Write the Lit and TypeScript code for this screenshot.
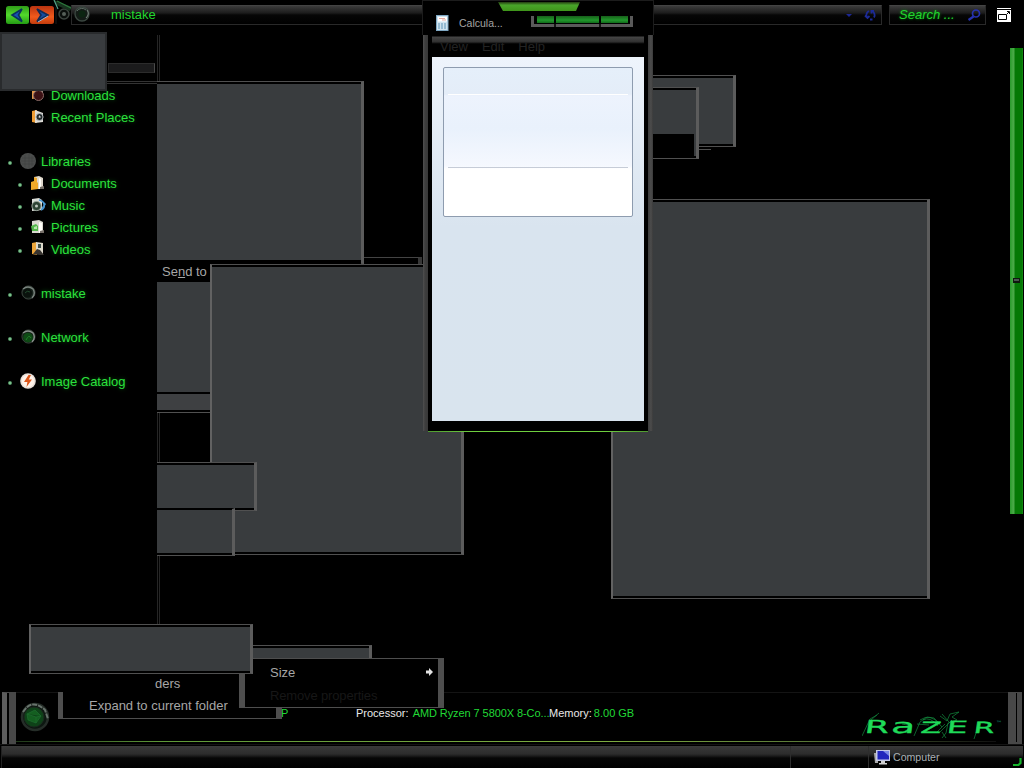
import {LitElement, html, css, svg} from 'lit';
import {customElement, property} from 'lit/decorators.js';
import {classMap} from 'lit/directives/class-map.js';
import {styleMap} from 'lit/directives/style-map.js';

type IconName =
    | 'orb' | 'libraries' | 'dark' | 'downloads' | 'recent' | 'documents'
    | 'music' | 'pictures' | 'videos' | 'network' | 'catalog';

interface NavItem {
    label: string;
    icon: IconName;
    level: 0 | 1;
    dot?: boolean;
    gap?: boolean;
}

interface Block {
    x: number;
    y: number;
    w: number;
    h: number;
    kind: string;
}

const NAV: NavItem[] = [
    {label: 'Downloads', icon: 'downloads', level: 1},
    {label: 'Recent Places', icon: 'recent', level: 1},
    {label: 'Libraries', icon: 'libraries', level: 0, dot: true, gap: true},
    {label: 'Documents', icon: 'documents', level: 1, dot: true},
    {label: 'Music', icon: 'music', level: 1, dot: true},
    {label: 'Pictures', icon: 'pictures', level: 1, dot: true},
    {label: 'Videos', icon: 'videos', level: 1, dot: true},
    {label: 'mistake', icon: 'dark', level: 0, dot: true, gap: true},
    {label: 'Network', icon: 'network', level: 0, dot: true, gap: true},
    {label: 'Image Catalog', icon: 'catalog', level: 0, dot: true, gap: true},
];

// Menu and window frames lying over the desktop, back to front.
const BLOCKS: Block[] = [
    {x: 157, y: 35, w: 3, h: 46, kind: 'rails'},
    {x: 157, y: 412, w: 3, h: 213, kind: 'rails'},
    {x: 107, y: 81, w: 50, h: 3, kind: 'lines'},
    {x: 108, y: 63, w: 47, h: 10, kind: 'chip'},
    {x: 157, y: 81, w: 207, h: 183, kind: 'panel open-left'},
    {x: 157, y: 260, w: 204, h: 4, kind: 'black'},
    {x: 364, y: 257, w: 58, h: 7, kind: 'strip'},
    {x: 157, y: 282, w: 54, h: 110, kind: 'fill'},
    {x: 157, y: 394, w: 54, h: 16, kind: 'fill light'},
    {x: 157, y: 412, w: 54, h: 1, kind: 'line'},
    {x: 210, y: 264, w: 254, h: 291, kind: 'panel'},
    {x: 157, y: 462, w: 100, h: 49, kind: 'panel open-left'},
    {x: 157, y: 508, w: 78, h: 48, kind: 'panel open-left flat-top'},
    {x: 640, y: 75, w: 96, h: 72, kind: 'panel'},
    {x: 640, y: 87, w: 59, h: 72, kind: 'panel'},
    {x: 640, y: 134, w: 54, h: 23, kind: 'black'},
    {x: 699, y: 149, w: 12, h: 1, kind: 'line'},
    {x: 611, y: 199, w: 319, h: 400, kind: 'panel'},
    {x: 240, y: 645, w: 132, h: 20, kind: 'panel'},
    {x: 0, y: 32, w: 107, h: 59, kind: 'soft'},
];

const ICONS = {
    orb: svg`
        <circle cx="8" cy="8" r="7" fill="#141c17" stroke="#3b4740" stroke-width="1.4"/>
        <path d="M3 5a6 6 0 0 1 9-1" stroke="#5e6b64" fill="none"/>
        <circle cx="8" cy="8" r="3.5" fill="#0c2512"/>
        <path d="M13 4q3 4-1 8" stroke="#7b8881" fill="none"/>`,
    dark: svg`
        <circle cx="8.5" cy="7.5" r="6.6" fill="#19251e" stroke="#39423c"/>
        <path d="M3 4q5-4 10 0q3 5-1 9" stroke="#7a837e" stroke-width="1.4" fill="none"/>
        <circle cx="7.5" cy="8" r="4.6" fill="#0a120d"/>
        <path d="M5 8q2-3 5-1" stroke="#22482d" fill="none"/>`,
    network: svg`
        <circle cx="8.5" cy="7.5" r="6.6" fill="#152218" stroke="#39423c"/>
        <path d="M3 4q5-4 10 0q3 5-1 9" stroke="#89918c" stroke-width="1.4" fill="none"/>
        <circle cx="8" cy="8.5" r="4.8" fill="#0e4a15"/>
        <path d="M6 11q3-6 5-2" stroke="#247e2c" fill="none"/>`,
    libraries: svg`
        <circle cx="8" cy="8" r="8" fill="#4b4d4c"/>
        <path d="M2 5h12M1 8h14M2 11h12M5 2v12M9 1v14M12 3v10" stroke="#404241" stroke-width=".6"/>`,
    downloads: svg`
        <path d="M1 3l6-1v9l-6 1z" fill="#e0964c"/>
        <path d="M6 2l6 1v5H6z" fill="#9a8a80"/>
        <circle cx="7.5" cy="8.5" r="5" fill="#3b1114" stroke="#8a6a66"/>`,
    recent: svg`
        <path d="M1 2l5-1v13l-5-1z" fill="#ef9d35"/>
        <path d="M4 1l8 3v9l-8 1z" fill="#dedcd6"/>
        <circle cx="8.5" cy="8" r="3.6" fill="#222a2c" stroke="#b7bdc0"/>
        <path d="M7.5 8h2.5M8.5 6.5v2" stroke="#eee" stroke-width=".8"/>`,
    documents: svg`
        <path d="M3 2l5-1 4 2v11H3z" fill="#ded8cb"/>
        <path d="M0 7l3-1V2l3 1v4l1 1v6l-7 1z" fill="#f0a929"/>
        <path d="M8 3l2 1v9l-2 1z" fill="#fffdf6"/>
        <path d="M9 12l4-1v3h-4z" fill="#726c64"/>`,
    music: svg`
        <path d="M1 2l7-1 3 2v10l-10 1z" fill="#d9dcd5"/>
        <circle cx="5.5" cy="9" r="4.6" fill="#2d4434" stroke="#98a49b"/>
        <circle cx="5.5" cy="9" r="1.5" fill="#bfc9c1"/>
        <path d="M8 3c6 1 7 8 2 10M11 4l3 3-3 5" stroke="#4796d1" stroke-width="1.6" fill="none"/>`,
    pictures: svg`
        <path d="M1 2l7-1 4 2v11H1z" fill="#d9d8cf"/>
        <path d="M8 3l3 1v9l-3 1z" fill="#fffef8"/>
        <path d="M0 7l5-2 2 2v5H1z" fill="#53b64a"/>
        <path d="M3 8l3-1v3H3z" fill="#b4e5a8"/>
        <path d="M9 12l4-1v3h-4z" fill="#77706a"/>`,
    videos: svg`
        <path d="M1 2l5-1v13l-5-1z" fill="#eda63a"/>
        <path d="M5 1l7 1v11H5z" fill="#ddd9cb"/>
        <path d="M7 3h3v4H7z" fill="#3c4c4a"/>
        <path d="M2 13l4-5 3 1 4 5H9z" fill="#383430"/>`,
    catalog: svg`
        <circle cx="8" cy="8" r="7.8" fill="#e8dfd8"/>
        <circle cx="8" cy="8" r="6.2" fill="#fff3ea"/>
        <path d="M8.5 2L4 9h3.4L6.5 14 12 6.6H8.8L11 2z" fill="#dc571b"/>`,
};

@customElement('skin-icon')
export class SkinIcon extends LitElement {
    static override styles = css`
        :host, svg {
            display: block;
            width: 16px;
            height: 16px;
        }
    `;

    @property()
    name: IconName = 'orb';

    override render() {
        return html`<svg viewBox="0 0 16 16">${ICONS[this.name]}</svg>`;
    }
}

@customElement('nav-tree')
export class NavTree extends LitElement {
    static override styles = css`
        :host {
            display: block;
            width: 157px;
            padding-top: 52px;
            color: #2ce23d;
            font-size: 13px;
        }

        .row {
            display: flex;
            align-items: center;
            height: 22px;
            padding-left: 8px;
            text-shadow: 0 0 4px #0a5c12;
        }

        .row.child {
            padding-left: 18px;
        }

        .row.gap {
            margin-top: 22px;
        }

        .dot {
            width: 4px;
            height: 4px;
            margin-top: 4px;
            border-radius: 50%;
            background: radial-gradient(#7cbf8d 25%, #205c30);
        }

        .dot.off {
            visibility: hidden;
        }

        skin-icon {
            margin: 0 5px 0 8px;
        }

        .child skin-icon {
            margin: 0 4px 0 9px;
        }
    `;

    override render() {
        return NAV.map((item) => html`
            <div class=${classMap({row: true, child: item.level === 1, gap: !!item.gap})}>
                <span class=${classMap({dot: true, off: !item.dot})}></span>
                <skin-icon name=${item.icon}></skin-icon>
                <span>${item.label}</span>
            </div>
        `);
    }
}

@customElement('calculator-window')
export class CalculatorWindow extends LitElement {
    static override styles = css`
        :host {
            display: flex;
            flex-direction: column;
            position: absolute;
            left: 422px;
            top: 0;
            width: 232px;
            height: 432px;
        }

        .title {
            display: flex;
            box-sizing: border-box;
            height: 35px;
            flex: none;
            padding: 14px 0 0 13px;
            background: #000;
            border: solid #1c1c1c;
            border-width: 1px 1px 0;
            color: #a4a4a4;
            font-size: 10.5px;
            line-height: 16px;
        }

        .title span {
            width: 72px;
            margin-left: 10px;
        }

        .calc {
            width: 13px;
            height: 16px;
        }

        .tab {
            position: absolute;
            left: 76px;
            top: 1px;
        }

        .frame {
            flex: 1;
            display: flex;
            flex-direction: column;
            margin: 0 1px;
            padding: 0 4px;
            background:
                linear-gradient(90deg, #505050, #3e3e3e 2px, #383838) 0 0 / 5px 100% no-repeat,
                linear-gradient(90deg, #3c3c3c, #4c4c4c 3px, #3a3a3a) 100% 0 / 5px 100% no-repeat,
                #000;
            border: solid transparent;
            border-width: 0 5px;
            background-origin: border-box;
        }

        .bottom {
            height: 1px;
            margin: 0 6px;
            background: linear-gradient(90deg, #4f9a2f, #6fcf3f 20%, #6fcf3f 80%, #4f9a2f);
        }

        .menu {
            box-sizing: border-box;
            height: 22px;
            padding: 3px 0 0 8px;
            display: flex;
            gap: 14px;
            color: #232323;
            font-size: 13px;
            line-height: 17px;
            background: linear-gradient(#000, #000 1px, #454545 2px, #303030 7px, #111 8px, #000 9px);
        }

        .client {
            flex: 1;
            margin-bottom: 10px;
            padding: 10px 11px;
            background: linear-gradient(#eef4fc, #d9e4ef 170px, #d9e4ee);
        }

        .display {
            box-sizing: border-box;
            height: 150px;
            padding: 0 4px;
            border: 1px solid #8e9caf;
            border-radius: 2px;
            background: linear-gradient(#e5effa, #e4edf8 26px, #edf3fd 28px, #e9f1fc 60px, #f5f8fe 98px, #fff 101px);
        }

        .history {
            height: 26px;
            border-bottom: 1px solid #fff;
        }

        .entry {
            height: 72px;
            border-bottom: 1px solid #c6ccd7;
        }
    `;

    override render() {
        return html`
            <div class="title">
                <svg class="calc" viewBox="0 0 13 16">
                    <rect x=".5" y=".5" width="11.5" height="15" fill="#cfe2ee" stroke="#7fa8c4"/>
                    <rect x="2" y="2" width="9" height="4.5" fill="#fff"/>
                    <path d="M3 3.5h6M6 5h4" stroke="#de9488" stroke-width=".8"/>
                    <path d="M2 9h2m1 0h2m1 0h2M2 11h2m1 0h2m1 0h2M2 13h2m1 0h2m1 0h2" stroke="#5d91b4" stroke-width="1.2"/>
                </svg>
                <span>Calcula...</span>
            </div>
            <svg class="tab" width="136" height="28">
                <defs>
                    <linearGradient id="g" x2="0" y2="1">
                        <stop stop-color="#243b12"/><stop offset=".35" stop-color="#49a52a"/>
                        <stop offset="1" stop-color="#3f951a"/>
                    </linearGradient>
                    <linearGradient id="b" x2="0" y2="1">
                        <stop stop-color="#17601a"/><stop offset=".6" stop-color="#21972c"/>
                        <stop offset="1" stop-color="#116c1b"/>
                    </linearGradient>
                </defs>
                <path d="M0 1h82l-4 9H5z" fill="url(#g)"/>
                <path d="M34.5 15v9.5h99V15" fill="none" stroke="#5a5a5a" stroke-width="3"/>
                <path d="M39 15h17v7H39zM58 15h43v7H58zM103 15h27v7h-27z" fill="url(#b)"/>
                <path d="M57 15v12M102 15v12" stroke="#000" stroke-width="1.5"/>
            </svg>
            <div class="frame">
                <div class="menu"><span>View</span><span>Edit</span><span>Help</span></div>
                <div class="client">
                    <div class="display">
                        <div class="history"></div>
                        <div class="entry"></div>
                    </div>
                </div>
            </div>
            <div class="bottom"></div>
        `;
    }
}

@customElement('app-root')
export class AppRoot extends LitElement {
    static override styles = css`
        :host {
            display: flex;
            flex-direction: column;
            position: relative;
            width: 1024px;
            height: 768px;
            overflow: hidden;
            background: #000;
            font-family: 'Liberation Sans', Arial, sans-serif;
            color: #a6a6a6;
        }

        .toolbar {
            display: flex;
            box-sizing: border-box;
            height: 32px;
            padding: 5px 0 0 5px;
        }

        .nav {
            width: 70px;
            height: 26px;
            margin-top: -5px;
            flex: none;
        }

        .field {
            display: flex;
            box-sizing: border-box;
            height: 20px;
            border: 1px solid #292929;
            border-top-color: #444;
            background: linear-gradient(#3c3c3c, #1c1c1c 7px, #060606 9px, #000);
            font-size: 13px;
            line-height: 18px;
            color: #22d62e;
        }

        .address {
            width: 811px;
            margin-left: -4px;
            padding-left: 2px;
        }

        .address span {
            flex: 1;
            margin-left: 21px;
        }

        .search {
            width: 97px;
            margin-left: 7px;
            padding-left: 9px;
            justify-content: space-between;
            font-style: italic;
            text-shadow: 0 0 3px #0a8a14;
        }

        .tools {
            flex: none;
            height: 18px;
        }

        .restore {
            margin: 3px 0 0 11px;
        }

        .body {
            display: flex;
            justify-content: space-between;
            height: 659px;
        }

        .scroll {
            box-sizing: border-box;
            width: 13px;
            height: 466px;
            margin: 16px 1px 0 0;
            padding: 230px 0 0 3px;
            background: linear-gradient(90deg, #2a9a2c, #46a944 3px, #4ca84a 4px, #057805 5px, #057805 12px, #1a951a);
        }

        .grip {
            width: 5px;
            height: 2px;
            border: 1px solid #10180f;
            border-bottom-width: 2px;
            background: #4b554f;
        }

        .details {
            display: flex;
            box-sizing: border-box;
            height: 54px;
            border-bottom: 1px solid #141414;
            font-size: 11px;
            line-height: 13px;
            background:
                linear-gradient(90deg, #20381a, #5f9a38 15%, #7ead40 60%, #5b7a37 80%, #111) 16px 50px / 980px 1px no-repeat,
                linear-gradient(#141414, #141414) 16px 1px / 992px 1px no-repeat;
        }

        .edge {
            width: 14px;
            height: 52px;
            margin: 1px 3px 0 2px;
            box-sizing: border-box;
            border: solid #484848;
            border-width: 1px 7px 0 5px;
            border-left-color: #5d5d5d;
            background: #000;
        }

        .edge.right {
            margin: 1px 2px 0 4px;
            border-width: 1px 5px 2px 8px;
            border-color: #484848;
        }

        .start {
            margin-top: 8px;
        }

        .facts {
            display: flex;
            flex: 1;
            padding: 16px 0 0 229px;
            white-space: nowrap;
            color: #e9e9e9;
        }

        .facts b {
            font-weight: 400;
            color: #21d936;
        }

        .tail {
            width: 75px;
        }

        .cpu {
            width: 193px;
        }

        .cpu b {
            margin-left: 1px;
            letter-spacing: -0.08px;
        }

        .mem b {
            margin-left: -1px;
        }

        .logo {
            margin-top: 15px;
            font-family: 'DejaVu Sans', sans-serif;
        }

        .status {
            display: flex;
            box-sizing: border-box;
            flex: 1;
            margin: 1px 1px 0 1px;
            border-left: 1px solid #222;
            background: linear-gradient(#393939, #2c2c2c 8px, #1b1b1b 10px, #060606 12px, #000);
            font-size: 10.6px;
            line-height: 22px;
        }

        .cell {
            width: 77px;
            border-left: 1px solid #2d2d2d;
            margin-left: 788px;
        }

        .computer {
            display: flex;
            flex: 1;
            gap: 3px;
            padding-left: 5px;
            border-left: 1px solid #2d2d2d;
            color: #a9b0b4;
        }

        .computer span {
            flex: 1;
        }

        .block {
            position: absolute;
            box-sizing: border-box;
        }

        .panel {
            border: 1px solid #505050;
            border-width: 1px 3px 1px 2px;
            border-left-color: #626262;
            border-right-color: #5c5c5c;
            background: #393c3e;
            box-shadow: inset 0 2px #000, inset 0 -2px #000;
        }

        .open-left {
            border-left: 0;
        }

        .flat-top {
            border-top-color: #000;
            box-shadow: inset 0 1px #000, inset 0 -2px #000;
        }

        .fill {
            background: #393c3e;
        }

        .light {
            background: #3e4042;
        }

        .black {
            background: #000;
        }

        .line {
            background: #505050;
        }

        .lines {
            border: solid #333;
            border-width: 1px 0;
        }

        .rails {
            border: solid #252525;
            border-width: 0 1px;
        }

        .strip {
            background: #000;
            border-top: 1px solid #444;
            border-right: 4px solid #373737;
        }

        .chip {
            background: #1b1b1c;
            border: 1px solid #2c2c2c;
            border-right: 1px solid #4a4a4a;
        }

        .soft {
            background: #393c3f;
            border: 2px solid #292b2d;
        }

        .popup {
            position: absolute;
            box-sizing: border-box;
            background: #000;
            font-size: 13px;
            white-space: nowrap;
        }

        .send {
            left: 157px;
            top: 260px;
            width: 53px;
            height: 22px;
            padding-left: 5px;
            line-height: 23px;
        }

        .cut {
            left: 156px;
            top: 674px;
            width: 83px;
            height: 20px;
            line-height: 20px;
            text-indent: -1px;
        }

        .expand {
            left: 58px;
            top: 692px;
            width: 224px;
            height: 27px;
            padding: 3px 0 0 26px;
            line-height: 22px;
            border: solid #4e4e4e;
            border-width: 0 6px 1px 5px;
        }

        .size {
            left: 239px;
            top: 658px;
            width: 205px;
            height: 50px;
            padding: 2px 4px 0 25px;
            line-height: 23px;
            border: solid #4e4e4e;
            border-width: 1px 6px 1px 6px;
        }

        .size .row {
            display: flex;
            justify-content: space-between;
            align-items: center;
        }

        .size svg {
            margin-top: -1px;
        }

        .size .disabled {
            color: #171717;
            letter-spacing: -0.15px;
        }

        .front {
            left: 29px;
            top: 624px;
            width: 224px;
            height: 50px;
        }
    `;

    private _renderBlock(b: Block) {
        return html`<div class="block ${b.kind}" style=${styleMap({
            left: `${b.x}px`,
            top: `${b.y}px`,
            width: `${b.w}px`,
            height: `${b.h}px`,
        })}></div>`;
    }

    private _renderToolbar() {
        return html`
            <div class="toolbar">
                <svg class="nav" viewBox="0 0 70 26">
                    <defs>
                        <linearGradient id="back" x2="0" y2="1">
                            <stop stop-color="#2f9c18"/><stop offset=".5" stop-color="#52d92c"/>
                            <stop offset="1" stop-color="#249c14"/>
                        </linearGradient>
                        <linearGradient id="next" x2="0" y2="1">
                            <stop stop-color="#b93410"/><stop offset=".6" stop-color="#f05a1c"/>
                            <stop offset="1" stop-color="#c23c0d"/>
                        </linearGradient>
                    </defs>
                    <rect x="1" y="6" width="23" height="18" rx="2.5" fill="url(#back)"/>
                    <rect x="25" y="6" width="24" height="18" rx="2.5" fill="url(#next)"/>
                    <path d="M17 9L7 15l10 6.5-3.500-6.500z" fill="#1752b4" stroke="#0a3260" stroke-width="1.6"/>
                    <path d="M32 9l4 6-4 6.500L43 15z" fill="#164c9f" stroke="#102a56" stroke-width="1.6"/>
                    <path d="M33 22l10-6" stroke="#97b8d3"/>
                    <circle cx="59" cy="14" r="5" fill="#0a0f0c" stroke="#3c453f" stroke-width="1.5"/>
                    <circle cx="59" cy="14" r="2" fill="#566059"/>
                    <path d="M49 0l18 7-2 4-14-6z" fill="#18331f"/>
                    <path d="M49 0l4 9" stroke="#55a38b" stroke-width="1.2"/>
                    <path d="M52 1l16 8" stroke="#2c7a3b" stroke-width="1.2"/>
                    <path d="M51 7v17" stroke="#1d1d1d"/>
                </svg>
                <div class="field address">
                    <skin-icon name="orb"></skin-icon>
                    <span>mistake</span>
                    <svg class="tools" width="40" height="18" viewBox="0 0 40 18">
                        <path d="M5 8h6l-3 3z" fill="#1c2794"/>
                        <g fill="none" stroke="#1c2a96" stroke-width="1.8">
                            <path d="M28 5a4.600 4.600 0 0 0-2 6.500M31 5a4.600 4.600 0 0 1 2 6.500M31.500 13.500h-2.500"/>
                            <path d="M24 9.500l2.500 2.500 2-2M30.500 7.500V5H33"/>
                        </g>
                    </svg>
                </div>
                <div class="field search">
                    <span>Search ...</span>
                    <svg class="tools" width="20" height="18" viewBox="0 0 20 18">
                        <circle cx="11" cy="7.5" r="3.5" fill="none" stroke="#2632b0" stroke-width="1.7"/>
                        <path d="M8.5 10.5L3.5 14" stroke="#2632b0" stroke-width="2.2"/>
                    </svg>
                </div>
                <svg class="restore" width="14" height="14" viewBox="0 0 14 14">
                    <path d="M0 0h14v14H0z" fill="#fff"/>
                    <path d="M0 1.5h14" stroke="#000"/>
                    <path d="M1.500 6.500h8v5h-8z" fill="none" stroke="#000"/>
                    <path d="M10 6l2-2M10 3.500h2.500V6" stroke="#000" fill="none"/>
                </svg>
            </div>
        `;
    }

    private _renderLogo() {
        return html`
            <svg class="logo" width="142" height="36" viewBox="862 706 142 36">
                <g fill="none" stroke="#138a3d" stroke-width=".7">
                    <path d="M862 736l8-17 7-4M871 720l8-7"/>
                    <path d="M914 736l6-14 7-5 7 1 8 9M920 720q10-7 20 4M923 720q7-4 15 6M917 724l12 1"/>
                    <path d="M940 716l7 5 3-7 9-2-7 5 5 3-9 3-2 10-4 5M942 714l7 8M940 732l12-12M946 738l-4-6M945 724l-9 9"/>
                    <path d="M974 739l5-15M902 724l10 2"/>
                </g>
                <text transform="translate(0 733) skewX(-8) scale(1.95 1)" y="0" font-size="15.500"
                    fill="#1fda59" stroke="#1fda59" stroke-width=".35"><tspan
                    x="443.1" font-size="18">R</tspan><tspan x="456.7" font-size="20">a</tspan><tspan
                    x="471.8">Z</tspan><tspan x="485.1" font-size="17">E</tspan><tspan x="499">R</tspan></text>
                <text x="996" y="725" font-size="6" fill="#189a7c">™</text>
            </svg>
        `;
    }

    override render() {
        return html`
            ${this._renderToolbar()}
            <div class="body">
                <nav-tree></nav-tree>
                <div class="scroll"><div class="grip"></div></div>
            </div>
            <div class="details">
                <div class="edge"></div>
                <svg class="start" width="33" height="36" viewBox="0 0 33 36">
                    <circle cx="16" cy="18" r="13" fill="#0d1711" stroke="#252d28" stroke-width="2.5"/>
                    <path d="M4 13q9-14 22-2l3 9" stroke="#68736c" stroke-width="2" stroke-dasharray="5 1" fill="none"/>
                    <circle cx="15" cy="18" r="10" fill="#0e4218" stroke="#19281d"/>
                    <path d="M8 15l8-4 6 6-5 7-8-3zM8 15l9 3 5-1M17 18v6" fill="#145e20" stroke="#1e6e2f" stroke-width=".7"/>
                </svg>
                <div class="facts">
                    <b class="tail">P</b>
                    <span class="cpu">Processor: <b>AMD Ryzen 7 5800X 8-Co...</b></span>
                    <span class="mem">Memory: <b>8.00 GB</b></span>
                </div>
                ${this._renderLogo()}
                <div class="edge right"></div>
            </div>
            <div class="status">
                <div class="cell"></div>
                <div class="computer">
                    <svg width="16" height="20" viewBox="0 0 16 20">
                        <path d="M0 7h4v10H1z" fill="#aaa"/>
                        <path d="M2 4h14v11H2z" fill="#c3c8e5"/>
                        <path d="M3.5 5H15v8.5H3.5z" fill="#2026bd"/>
                        <path d="M9 5h6v5z" fill="#7888e5"/>
                        <path d="M7 15h4v2h2v1.5H5V17h2z" fill="#d0d0d0"/>
                    </svg>
                    <span>Computer</span>
                    <svg width="10" height="21" viewBox="0 0 10 21">
                        <path d="M7.5 12v5l-2 2H0" fill="none" stroke="#16b52d" stroke-width="2.2"/>
                    </svg>
                </div>
            </div>

            ${BLOCKS.map((b) => this._renderBlock(b))}
            <div class="popup send">Se<u>n</u>d to</div>
            <div class="popup expand">Expand to current folder</div>
            <div class="popup cut">ders</div>
            <div class="popup size">
                <div class="row">
                    <span>Size</span>
                    <svg width="9" height="10" viewBox="0 0 9 10">
                        <path d="M1 3.5h3V1l4 4-4 4V6.5H1z" fill="#e2e2e2"/>
                    </svg>
                </div>
                <div class="disabled">Remove properties</div>
            </div>
            <div class="block panel front"></div>
            <calculator-window></calculator-window>
        `;
    }
}

declare global {
    interface HTMLElementTagNameMap {
        'app-root': AppRoot;
        'calculator-window': CalculatorWindow;
        'nav-tree': NavTree;
        'skin-icon': SkinIcon;
    }
}
